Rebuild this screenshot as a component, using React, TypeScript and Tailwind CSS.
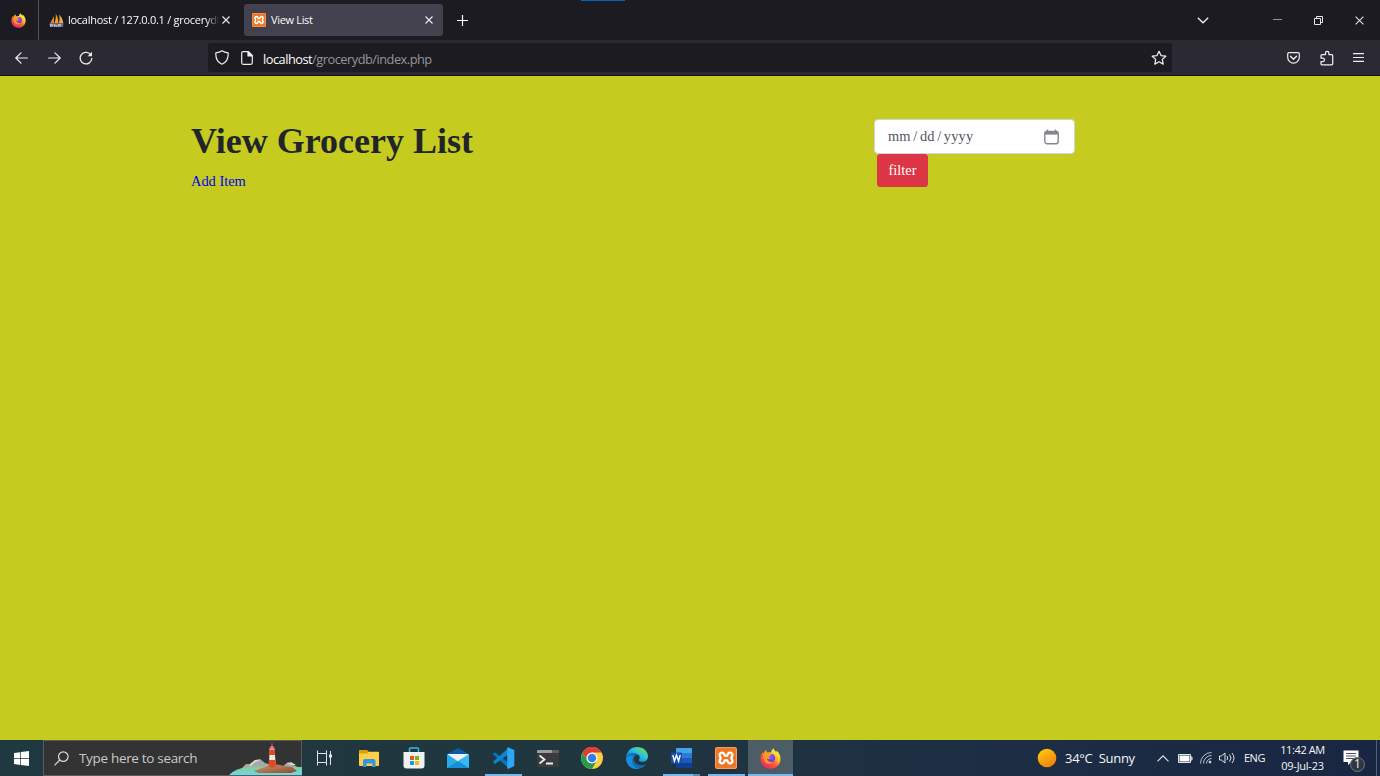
import React from "react";

const UI = "font-['Open_Sans','Noto_Sans',sans-serif]";

function FirefoxLogo({ size, id }: { size: number; id: string }) {
  return (
    <svg width={size} height={size} viewBox="0 0 22 22" className="shrink-0">
      <defs>
        <linearGradient id={id + "a"} x1="0.85" y1="0.1" x2="0.25" y2="0.95">
          <stop offset="0" stopColor="#fff44f" />
          <stop offset="0.35" stopColor="#ffb02a" />
          <stop offset="0.65" stopColor="#ff5634" />
          <stop offset="1" stopColor="#f0246c" />
        </linearGradient>
        <radialGradient id={id + "b"} cx="0.55" cy="0.4" r="0.6">
          <stop offset="0" stopColor="#9059ff" />
          <stop offset="1" stopColor="#6a35c9" />
        </radialGradient>
      </defs>
      <path d="M11.5 4.5C12 2.5 13 1 14.6.4c.2 2 1.2 2.7 2.4 4 .2-.6.3-1 .1-1.8 2.500 1.600 4.400 5 4.400 8.800C21.500 17.300 16.800 21.700 11 21.700S.5 17.300.5 11.500c0-3 1-5.500 2.600-7.400.1.800.4 1.300.9 1.700.4-1.800 1.200-3 2.400-3.800 0 1.300.6 2 1.200 2.600z" fill={`url(#${id}a)`} />
      <circle cx="11.400" cy="10.600" r="4.600" fill={`url(#${id}b)`} />
      <path d="M4 6c2-1.600 4.700-1.300 6 .2l2.200.1c-.2 1.800-2.200 1.800-2.600 2.600-.2.800.2 1.600 1 1.700-1 1.600-2.700.8-3.500.4.600 3 4 4.500 6.400 3.200-2 3.300-7 2.800-9-.5-1.100-1.900-1.600-5-.5-7.700z" fill="#ff9a1f" />
      <path d="M12 5c3.500-.1 5.600 2.500 5.700 5.400.9-1.200 1-2.600.6-4.100 1.900 2.500 1.700 6.500-.8 9.300 4-2.800 4-8.400.5-11.400-2.400-1.400-4.700-.7-6 .8z" fill="#ffdc35" opacity=".85" />
    </svg>
  );
}

function XamppLogo({ size }: { size: number }) {
  return (
    <svg width={size} height={size} viewBox="0 0 22 22" className="shrink-0">
      <rect width="22" height="22" rx="2" fill="#f07522" />
      <rect x=".6" y=".6" width="20.800" height="20.800" rx="1.600" fill="none" stroke="#f6a873" strokeWidth=".9" />
      <g fill="none" strokeLinecap="round" strokeLinejoin="round">
        <path d="M7 8 8.200 11 7 14M15 8l-1.200 3 1.200 3M8.200 11h5.600" stroke="#fff" strokeWidth="7" />
        <path d="M7 8 8.200 11 7 14M15 8l-1.200 3 1.200 3M8.200 11h5.600" stroke="#f07522" strokeWidth="2.300" />
      </g>
    </svg>
  );
}

function PhpMyAdminLogo() {
  return (
    <svg width="15" height="15" viewBox="0 0 15 15" className="shrink-0">
      <path d="M1 10.500 5 3v7.500z" fill="#d98a2b" />
      <path d="M5.300 10.500C6.800 7 7 3.500 6.700.8c2 3 3 6.500 2.600 9.700z" fill="#f39b23" />
      <path d="M9.800 10.500C10.900 7 10.800 4 10 1.500c2.600 2.400 4 5.500 4.300 9z" fill="#f1a64a" />
      <path d="M.3 10.500h14.400l-1 3.500H1z" fill="#6d7294" />
      <path d="M1.500 14v-2.500h2v1.300h-2M5.500 11v3m0-1.500h2V14m2 0v-2.500h2v1.300h-2" fill="none" stroke="#c9cce0" strokeWidth=".8" />
    </svg>
  );
}

const Cross = ({ size = 8, width = 1.2 }: { size?: number; width?: number }) => (
  <svg width={size} height={size} viewBox="0 0 8 8" fill="none" stroke="#e8e8ec" strokeWidth={width}>
    <path d="m.5.5 7 7m0-7-7 7" />
  </svg>
);

function TabBar() {
  return (
    <div className="flex h-10 bg-[#1c1b22] text-[#fbfbfe]">
      <div className="flex w-[39px] items-center justify-center border-r border-[#55545c] pr-[2px]">
        <FirefoxLogo size={15} id="top" />
      </div>
      <div className="flex w-[205px] items-center pl-[10px]">
        <PhpMyAdminLogo />
        <div className="ml-[4px] w-[151px] whitespace-nowrap text-[11px] leading-4 tracking-[-0.27px] [mask-image:linear-gradient(to_right,black_138px,transparent_151px)]">localhost / 127.0.0.1 / grocerydb</div>
        <div className="ml-[3px]"><Cross /></div>
      </div>
      <div className="my-1 flex w-[199px] items-center rounded-[3px] bg-[#42414d] pl-2">
        <XamppLogo size={14} />
        <span className="ml-[5px] flex-1 text-[11px] leading-4 tracking-[-0.33px]">View List</span>
        <div className="mr-[10px]"><Cross /></div>
      </div>
      <div className="ml-[14px] flex items-center">
        <svg width="11" height="11" viewBox="0 0 11 11" stroke="#fff" strokeWidth="1.200"><path d="M5.500 0v11M0 5.500h11" /></svg>
      </div>
      <div className="ml-auto flex items-center pr-4">
        <svg width="12" height="7" viewBox="0 0 12 7" fill="none" stroke="#f0f0f4" strokeWidth="1.300" className="mr-[64px]"><path d="m.8.8 5.200 5 5.200-5" /></svg>
        <svg width="9" height="9" viewBox="0 0 9 9" className="mr-[32px]"><path d="M0 3h9v1H0z" fill="#96959c" /></svg>
        <svg width="9" height="9" viewBox="0 0 9 9" fill="none" stroke="#e5e5e9" className="mr-[32px]"><path d="M.5 2.500h6v6h-6zM2.500 2.500v-2h6v6h-2" /></svg>
        <Cross size={9} width={0.9} />
      </div>
    </div>
  );
}

function Toolbar() {
  return (
    <div className="flex h-9 items-center border-b border-[#121117] bg-[#2b2a33] text-[#fbfbfe]">
      <div className="flex w-[208px] items-center pl-[15px]">
        <svg width="13" height="12" viewBox="0 0 13 12" fill="none" stroke="#eeeef2" strokeWidth="1.200" strokeLinecap="round" strokeLinejoin="round"><path d="M12.400 6H.8M6 .8.8 6 6 11.200" /></svg>
        <svg width="13" height="12" viewBox="0 0 13 12" fill="none" stroke="#eeeef2" strokeWidth="1.200" strokeLinecap="round" strokeLinejoin="round" className="ml-[20px]"><path d="M.6 6h11.600M7 .8 12.200 6 7 11.200" /></svg>
        <svg width="14" height="14" viewBox="0 0 14 14" fill="none" stroke="#eeeef2" strokeWidth="1.300" strokeLinecap="round" className="ml-[18px]"><path d="M12.800 7.500A5.800 5.800 0 1 1 11 2.900l1 1" /><path d="M13 .8v4.400H8.600z" fill="#eeeef2" stroke="none" /></svg>
      </div>
      <div className="flex h-[29px] w-[964px] items-center rounded-[3px] bg-[#1c1b22] pl-[7px] pr-[5px]">
        <svg width="14" height="15" viewBox="0 0 14 15" fill="none" stroke="#eeeef2" strokeWidth="1.200" strokeLinejoin="round"><path d="M7 .8c1.600 1.200 3.600 1.900 6.200 2.100.2 5-1.500 9.300-6.200 11.300C2.300 12.200.6 7.900.8 2.900 3.400 2.700 5.400 2 7 .8z" /></svg>
        <svg width="12" height="14" viewBox="0 0 12 14" fill="none" stroke="#eeeef2" strokeWidth="1.200" strokeLinejoin="round" className="ml-[12px]"><path d="M2 .7h5.500l3.800 3.800v7.300q0 1.500-1.500 1.500H2.200Q.7 13.300.7 11.800V2Q.7.700 2 .7z" /><path d="M7 .7v4.300h4.300z" fill="#eeeef2" /></svg>
        <span className="ml-[10px] mt-[2px] flex-1 text-[12.800px] leading-[18px] tracking-[-0.5px] text-[#96959d]"><span className="text-[#fbfbfe]">localhost</span>/grocerydb/index.php</span>
        <svg width="16" height="16" viewBox="0 0 16 16" fill="none" stroke="#eeeef2" strokeWidth="1.250" strokeLinejoin="round"><path d="m8 1.300 2 4.300 4.800.6-3.500 3.200.9 4.700L8 11.800l-4.200 2.300.9-4.700L1.200 6.200 6 5.600z" /></svg>
      </div>
      <div className="flex flex-1 items-center justify-end pr-4">
        <svg width="13" height="12" viewBox="0 0 13 12" fill="none" stroke="#eeeef2" strokeWidth="1.200" strokeLinejoin="round"><path d="M2 .7h9q1.300 0 1.300 1.300v3.300a5.800 5.800 0 0 1-11.600 0V2Q.7.700 2 .7z" /><path d="m3.500 4.200 3 3 3-3" strokeLinecap="round" strokeWidth="1.350" /></svg>
        <svg width="14" height="16" viewBox="0 0 14 16" fill="none" stroke="#eeeef2" strokeWidth="1.250" strokeLinejoin="round" className="ml-[20px]"><path d="M5.500 4.500V3a1.700 1.700 0 0 1 3.400 0v1.500h2.800q1 0 1 1v8.300q0 1-1 1H2q-1 0-1-1v-2.300h1.800a1.700 1.700 0 0 0 0-3.400H1V5.500q0-1 1-1z" /></svg>
        <svg width="11" height="9" viewBox="0 0 11 9" stroke="#eeeef2" strokeWidth="1.100" className="ml-[19px]"><path d="M0 .6h11M0 4.500h11M0 8.400h11" /></svg>
      </div>
    </div>
  );
}

function GroceryPage() {
  return (
    <main className="flex flex-1 bg-[#c5cb1f] pl-[191px] pt-[43px] font-['Liberation_Serif',serif] text-[14.4px] text-[#212529]">
      <div className="w-[683px]">
        <h1 className="mt-px text-[36px] font-bold leading-[43px]">View Grocery List</h1>
        <a href="#" className="mt-[7px] block leading-[22px] text-[#0000ee]">Add Item</a>
      </div>
      <div>
        <div className="flex h-[35px] w-[201px] items-center justify-between rounded-[4px] border border-[#ced4da] bg-white pl-[13px] pr-[15px] text-[#51565c]">
          <span className="mt-px whitespace-pre text-[14.4px] tracking-[0.15px] [word-spacing:-1.200px]">mm / dd / yyyy</span>
          <svg width="15" height="16" viewBox="0 0 15 16" fill="none" stroke="#83878c" strokeWidth="1.400"><rect x=".8" y="2.500" width="13.400" height="12.200" rx="2" /><path d="M1 4.200h13" strokeWidth="2.800" /><path d="M3.500.5v3m8-3v3" /></svg>
        </div>
        <button className="ml-[3px] block h-[33px] w-[51px] rounded-[3.500px] bg-[#dc3545] pt-px text-center text-[14.4px] text-white">filter</button>
      </div>
    </main>
  );
}

function Lighthouse() {
  return (
    <svg width="73" height="34" viewBox="0 0 73 34" className="ml-auto shrink-0">
      <defs>
        <linearGradient id="rock" x1="0" y1="0" x2="1" y2="1"><stop stopColor="#d39668" /><stop offset="1" stopColor="#874b31" /></linearGradient>
        <linearGradient id="sea" x1="0" y1="0" x2="0" y2="1"><stop stopColor="#7fcf92" /><stop offset="1" stopColor="#70d6e7" /></linearGradient>
      </defs>
      <path d="M12 28 17 23l4 0 5-4 5-1 5 4 7 2 10 2 6-5 4 2 9 5v5H12z" fill="#a8a8a7" />
      <path d="m21 23 5-4 5 0-6 3-4 4zm37 0 4-2 5 3-5 0z" fill="#d4d4d1" />
      <path d="M0 34q7-7 19-8 20-1 54 0v8z" fill="url(#sea)" />
      <path d="M25 30q8-3 14-5 9-3 16 0l8 1 5 4-6 2H29z" fill="url(#rock)" />
      <path d="M40.500 9h5l1.500 16q-4 2-7 0z" fill="#e9e9e4" />
      <path d="M40.300 9h5.400l.6 5h-6.500zm-.5 10h6.800l.5 6.500q-4 2-7.500 0z" fill="#df4925" />
      <path d="M40.500 9V7l2.500-3 2.500 3v2z" fill="#d4b2a6" /><path d="M43 2v4m-2.500 1h5" stroke="#c54b35" />
    </svg>
  );
}

const Folder = () => (
  <svg width="20" height="17" viewBox="0 0 20 17">
    <path d="M0 1.200Q0 .2 1 .2h7l1.500 1.500H19q1 0 1 1V15q0 1-1 1H1q-1 0-1-1z" fill="#ffcf4b" />
    <path d="M0 1.200Q0 .2 1 .2h7l1.500 1.500L8 3.500H0z" fill="#e2a000" />
    <path d="M4 17v-6q0-2 2-2h8.500q2 0 2 2v6h-3.200v-3.500H7.500V17z" fill="#3594df" />
  </svg>
);
const Store = () => (
  <svg width="22" height="22" viewBox="0 0 22 22">
    <path d="M6.500 6V2Q6.500 1 7.500 1h7q1 0 1 1v4" fill="none" stroke="#37b8ed" strokeWidth="1.500" />
    <path d="M.5 5h21v13.500q0 3-3 3h-15q-3 0-3-3z" fill="#f1f1f1" />
    <path d="M7 9h4v4H7z" fill="#f25022" /><path d="M12 9h4v4h-4z" fill="#7fba00" /><path d="M7 14h4v4H7z" fill="#00a4ef" /><path d="M12 14h4v4h-4z" fill="#ffb900" />
  </svg>
);
const Mail = () => (
  <svg width="22" height="20" viewBox="0 0 22 20">
    <path d="M0 6 11 0l11 6v5H0z" fill="#0d5aa8" /><path d="M1 6h20v8H1z" fill="#f0f0f0" />
    <path d="m0 6 12 8-9 6H0z" fill="#2ba9ed" /><path d="M22 6v14H1l10-7z" fill="#36b8f3" /><path d="m11 13 11 7H0z" fill="#188ed7" />
  </svg>
);
const Code = () => (
  <svg width="23" height="22" viewBox="0 0 23 22">
    <path d="m.7 7 2-1.800L17 16v5.500z" fill="#0078c4" /><path d="M.7 15 17 .5V7L3 17z" fill="#0b85cb" />
    <path d="M16 .2 22.300 3v16L16 22l-.8-1V1z" fill="#2aa8f2" />
  </svg>
);
const Terminal = () => (
  <svg width="22" height="17" viewBox="0 0 22 17">
    <rect width="22" height="17" rx="1" fill="#3b3b3c" /><path d="M0 1q0-1 1-1h20q1 0 1 1v2H0z" fill="#9d9d9d" /><path d="M15 0h7v3h-7z" fill="#606060" />
    <path d="m2.500 5.500 5 4-5 4M9 13.500h7" fill="none" stroke="#eee" strokeWidth="1.800" />
  </svg>
);
const Chrome = () => (
  <svg width="22" height="22" viewBox="0 0 22 22">
    <circle cx="11" cy="11" r="11" fill="#ffcd40" /><path d="M1.500 5.500A11 11 0 0 1 20.500 5.500H11L6.200 13.700z" fill="#e33b2e" />
    <path d="M1.500 5.500 6.200 13.800l4.800 2.700 4.800-2.700L11 22A11 11 0 0 1 1.500 5.500z" fill="#249c4e" />
    <circle cx="11" cy="11" r="5.500" fill="#fff" /><circle cx="11" cy="11" r="4.300" fill="#337deb" />
  </svg>
);
const Edge = () => (
  <svg width="22" height="22" viewBox="0 0 22 22">
    <defs><linearGradient id="edge" x1="0" y1="1" x2="1" y2="0"><stop offset=".35" stopColor="#1598dc" /><stop offset=".6" stopColor="#35c4d8" /><stop offset=".85" stopColor="#65dd58" /></linearGradient></defs>
    <path d="M.2 10C.8 4 5.200 0 11 0c6.300 0 11 4.300 11 9.200 0 3.600-2.600 5.600-5.500 5.600-2.500 0-4.200-1-3.600-1.800 2-2.500.3-6.200-3.600-6.200C5 6.800 1 8 .2 10z" fill="url(#edge)" />
    <path d="M.1 12C-.2 8 3.500 6 8 6c2 0 4 1 4.600 2.200-4-1-6 2-4.500 5.800 1.700 4.300 7.500 5.700 12.300 2.800C18.500 20 15 22 11 22 5 22 .4 17.400.1 12z" fill="#116fb6" />
    <path d="M8 9c-4 4.500-1.500 11.500 5 12.900C6 23.200.4 18 .1 12 .1 9 3.500 7.500 8 9z" fill="#168fd9" />
  </svg>
);
const Word = () => (
  <svg width="21" height="20" viewBox="0 0 21 20">
    <path d="M6 0h14q1 0 1 1v4H5V1q0-1 1-1z" fill="#41a5ee" /><path d="M5 5h16v5H5z" fill="#2b7cd3" /><path d="M5 10h16v5H5z" fill="#185abd" /><path d="M5 15h16v4q0 1-1 1H6q-1 0-1-1z" fill="#103f91" />
    <rect y="4.500" width="11" height="11" rx="1" fill="#174eaa" /><path d="m1.800 7 1.600 6 2.100-6 2.100 6 1.600-6" fill="none" stroke="#fff" strokeWidth="1.400" />
  </svg>
);

function TaskButton({ children, running = false, active = false, stacked = false }: { children: React.ReactNode; running?: boolean; active?: boolean; stacked?: boolean }) {
  return (
    <div className={"flex h-full w-[44.600px] flex-col items-center " + (active ? "bg-[#4d5d66]" : "")}>
      <div className="flex h-[34px] items-center pt-[2px]">{children}</div>
      {running && (
        <div className={"flex h-[2px] " + (active ? "w-full" : "w-[37px]")}>
          <div className="flex-1 bg-[#76b9ed]" />
          {stacked && <div className="w-[7px] bg-[#5b8db8]" />}
        </div>
      )}
    </div>
  );
}

function Taskbar() {
  return (
    <footer className="flex h-9 bg-[linear-gradient(to_right,#203840,#20363f_45%,#1c2d44_75%,#192642)] text-[#f4f6f8]">
      <div className="flex w-[43px] items-center justify-center">
        <svg width="15" height="15" viewBox="0 0 15 15" fill="#fff"><path d="M0 2 6.300 1.200v6H0zm7-1L15 0v7.200H7zM0 7.900h6.300v6L0 13zm7 0h8V15l-8-1z" /></svg>
      </div>
      <div className="flex w-[259px] items-center border border-[#5b5c5c] bg-[#333]">
        <svg width="15" height="15" viewBox="0 0 15 15" fill="none" stroke="#d8d8d8" strokeWidth="1.200" className="ml-[10px]"><circle cx="9.300" cy="5.600" r="4.800" /><path d="M5.800 9 .5 14.400" /></svg>
        <span className="ml-[10px] whitespace-nowrap text-[13.500px] leading-[18px] tracking-[-0.32px] text-[#c9c9c9]">Type here to search</span>
        <div className="-mr-px ml-auto"><Lighthouse /></div>
      </div>
      <div className="flex w-[45px] items-center justify-center pr-[2px]">
        <svg width="16" height="16" viewBox="0 0 16 16" fill="none" stroke="#e4e7e8"><path d="M1.500.5v3h9v-3m-9 15v-3h9v3M1.500 3.500v9M10.500 3.500v9M14.500 1v14" /><path d="M13 4.500h3v3h-3z" fill="#e4e7e8" stroke="none" /></svg>
      </div>
      <TaskButton><Folder /></TaskButton>
      <TaskButton><Store /></TaskButton>
      <TaskButton><Mail /></TaskButton>
      <TaskButton running><Code /></TaskButton>
      <TaskButton><Terminal /></TaskButton>
      <TaskButton><Chrome /></TaskButton>
      <TaskButton><Edge /></TaskButton>
      <TaskButton running stacked><Word /></TaskButton>
      <TaskButton running><XamppLogo size={22} /></TaskButton>
      <TaskButton running active><FirefoxLogo size={21} id="task" /></TaskButton>
      <div className="ml-auto flex items-center">
        <svg width="20" height="20" viewBox="0 0 20 20"><defs><linearGradient id="sun" x1=".2" y1="0" x2=".8" y2="1"><stop stopColor="#ffcb0a" /><stop offset="1" stopColor="#f27a12" /></linearGradient></defs><circle cx="10" cy="10" r="9.300" fill="url(#sun)" /></svg>
        <div className="ml-2 w-[92px] whitespace-pre text-[13px] leading-[18px] tracking-[-0.28px]">34°C  Sunny</div>
        <svg width="12" height="7" viewBox="0 0 12 7" fill="none" stroke="#e4e6e9" strokeWidth="1.100"><path d="m.5 6.300 5.500-5.500 5.500 5.500" /></svg>
        <svg width="15" height="9" viewBox="0 0 15 9" className="ml-[9px]"><path d="M.5.5h12v8H.500zM13 3h1v3h-1z" fill="none" stroke="#e4e6e9" /><path d="M1.500 1.500h10v6h-10z" fill="#fff" /></svg>
        <svg width="12" height="12" viewBox="0 0 12 12" fill="none" stroke="#cfd3d9" strokeWidth=".9" className="ml-[7px]"><path d="M.5 11.500A11 11 0 0 1 11.500.5M3.500 11.500a8 8 0 0 1 8-8M6.500 11.500a5 5 0 0 1 5-5" /><circle cx="10" cy="10" r="1" fill="#fff" /></svg>
        <svg width="16" height="12" viewBox="0 0 16 12" fill="none" stroke="#e2e4e8" strokeWidth="1" className="ml-[7px]"><path d="M.5 4h2L6 1v10L2.500 8h-2zM8 4q1.500 2 0 4M10.500 2.500q3 3.500 0 7M13 1q4 5 0 10" /></svg>
        <span className="ml-[9px] w-[22px] whitespace-nowrap text-[11px] leading-4 tracking-[-0.5px]">ENG</span>
        <div className="ml-[9px] w-[55px] whitespace-nowrap text-center text-[11px] leading-4 tracking-[-0.4px]"><div>11:42 AM</div><div className="tracking-[-0.25px]">09-Jul-23</div></div>
        <div className="relative ml-[13px] h-6 w-8">
          <svg width="22" height="22" viewBox="0 0 22 22" className="mt-[4px]"><path d="M.5.500h15v11.500H8l-3 3v-3H.500z" fill="#fff" /><path d="M3 3.500h10M3 6h10M3 8.500h10" stroke="#36415a" strokeWidth=".9" /><circle cx="14.500" cy="14.500" r="7" fill="#303740" stroke="#707780" /></svg>
          <span className="absolute left-[11px] top-[10px] text-[12px] leading-4">1</span>
        </div>
        <div className="ml-px h-9 w-px bg-[#536078]" />
        <div className="w-[3px]" />
      </div>
    </footer>
  );
}

export default function App() {
  return (
    <div className={"relative flex h-[776px] w-[1380px] flex-col overflow-hidden " + UI}>
      <div className="absolute left-[581px] top-0 h-px w-[44px] bg-[#0067bd]" />
      <TabBar />
      <Toolbar />
      <GroceryPage />
      <Taskbar />
    </div>
  );
}
